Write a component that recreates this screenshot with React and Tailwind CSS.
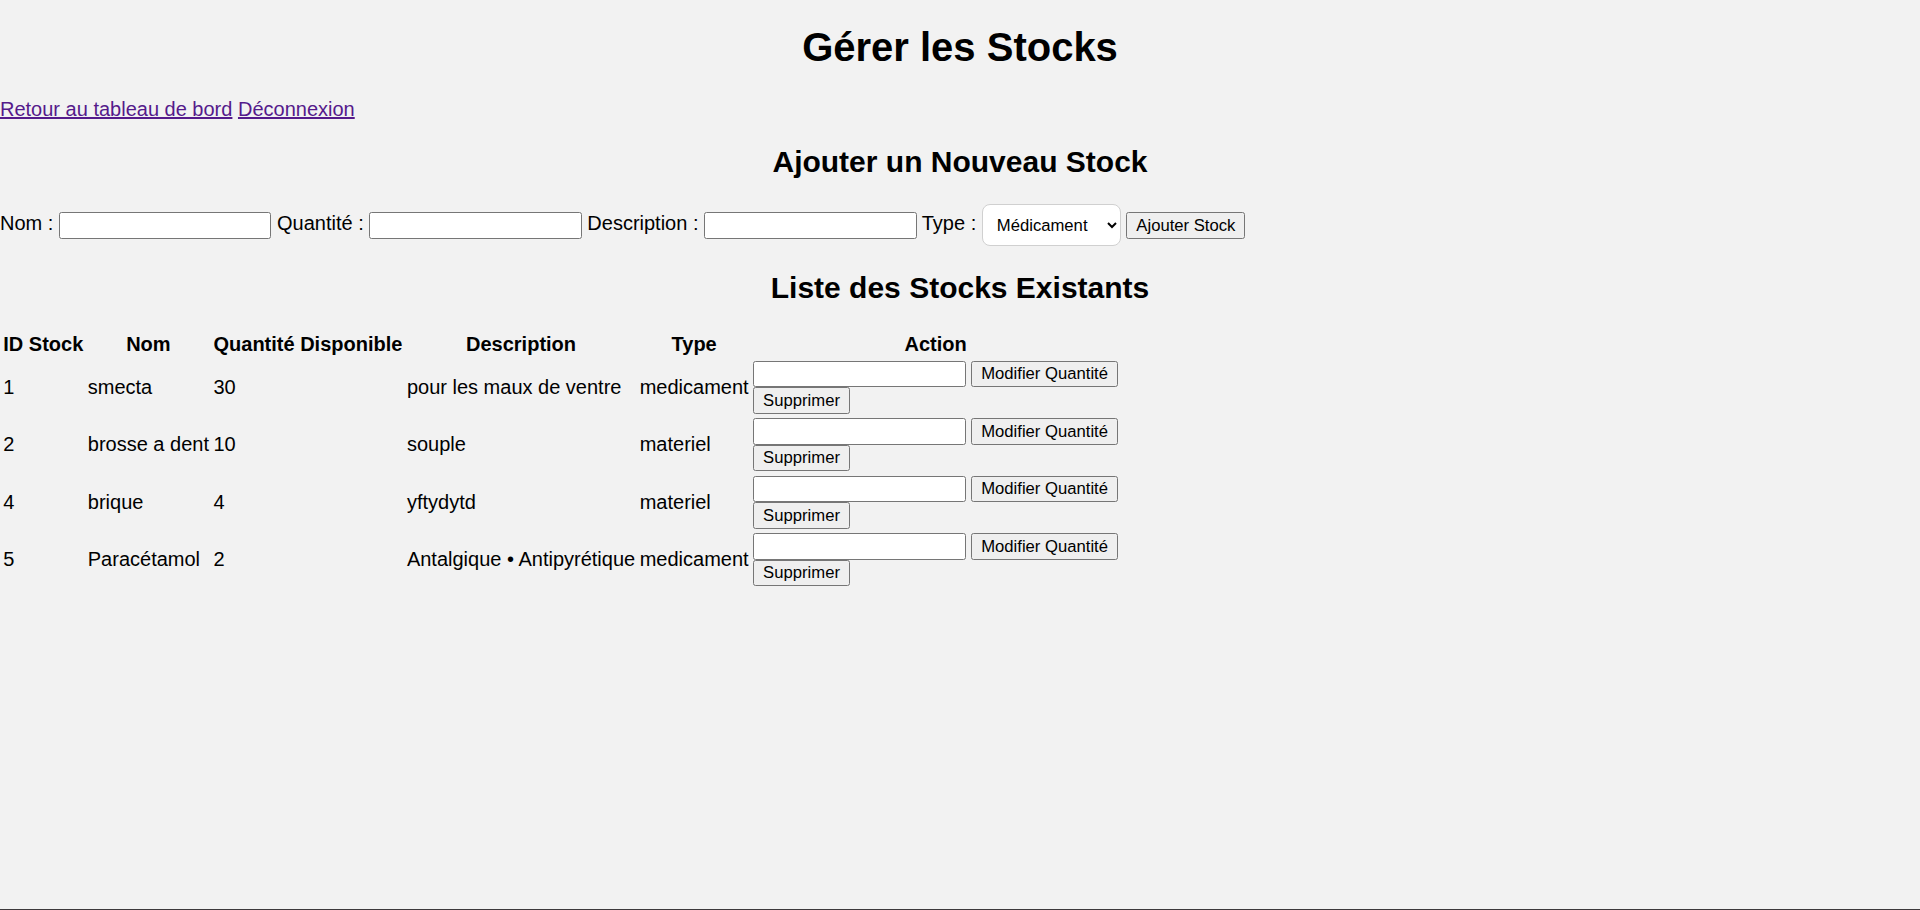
import { useState } from 'react';

const initialStocks = [
  { id: 1, nom: 'smecta', quantite: 30, description: 'pour les maux de ventre', type: 'medicament' },
  { id: 2, nom: 'brosse a dent', quantite: 10, description: 'souple', type: 'materiel' },
  { id: 4, nom: 'brique', quantite: 4, description: 'yftydytd', type: 'materiel' },
  { id: 5, nom: 'Paracétamol', quantite: 2, description: 'Antalgique • Antipyrétique', type: 'medicament' }
];

const inputClass =
  'w-[212.5px] h-[26.5px] border border-[#767676] rounded-[2.5px] bg-white px-[2.5px] text-[16.67px] leading-[normal] align-baseline';
const buttonClass =
  'h-[26.5px] border border-[#767676] rounded-[2.5px] bg-[#efefef] px-[9px] text-[16.67px] leading-[normal] text-black align-baseline';

function App() {
  const [stocks] = useState(initialStocks);

  return (
    <div className="min-h-[910px] bg-[#f2f2f2] text-black text-[20px] leading-[normal] font-['Liberation_Sans',Arial,sans-serif] border-b border-[#3d393b] overflow-hidden">
      <h1 className="text-center text-[40px] font-bold leading-[normal] mt-[24.5px] mb-[28px]">
        Gérer les Stocks
      </h1>

      {/* Navigation */}
      <div>
        <a href="#" className="text-[#551a8b] underline">Retour au tableau de bord</a>{' '}
        <a href="#" className="text-[#551a8b] underline">Déconnexion</a>
      </div>

      {/* Ajout */}
      <h2 className="text-center text-[30px] font-bold leading-[normal] my-[24.9px]">
        Ajouter un Nouveau Stock
      </h2>
      <form onSubmit={(e) => e.preventDefault()}>
        <label>Nom :</label>{' '}
        <input type="text" className={inputClass} />{' '}
        <label>Quantité :</label>{' '}
        <input type="text" className={inputClass} />{' '}
        <label>Description :</label>{' '}
        <input type="text" className={inputClass} />{' '}
        <label>Type :</label>{' '}
        <select className="w-[139px] h-[42px] border border-[#d0d0d0] rounded-[8px] bg-white pl-[10px] pr-[8px] text-[16.67px] leading-[normal] text-black align-middle">
          <option>Médicament</option>
          <option>Matériel</option>
        </select>{' '}
        <button type="submit" className={buttonClass}>Ajouter Stock</button>
      </form>

      {/* Liste */}
      <h2 className="text-center text-[30px] font-bold leading-[normal] my-[24.9px]">
        Liste des Stocks Existants
      </h2>
      <table className="border-separate border-spacing-[2.5px]">
        <thead>
          <tr>
            <th className="p-[1.25px] font-bold text-center">ID Stock</th>
            <th className="p-[1.25px] font-bold text-center">Nom</th>
            <th className="p-[1.25px] font-bold text-center">Quantité Disponible</th>
            <th className="p-[1.25px] font-bold text-center">Description</th>
            <th className="p-[1.25px] font-bold text-center">Type</th>
            <th className="p-[1.25px] font-bold text-center">Action</th>
          </tr>
        </thead>
        <tbody>
          {stocks.map((stock) => (
            <tr key={stock.id}>
              <td className="p-[1.25px] align-middle">{stock.id}</td>
              <td className="p-[1.25px] align-middle">{stock.nom}</td>
              <td className="p-[1.25px] align-middle">{stock.quantite}</td>
              <td className="p-[1.25px] align-middle">{stock.description}</td>
              <td className="p-[1.25px] align-middle">{stock.type}</td>
              <td className="p-[1.25px] align-middle">
                <form onSubmit={(e) => e.preventDefault()}>
                  <input type="text" className={inputClass} />{' '}
                  <button type="submit" className={buttonClass}>Modifier Quantité</button>
                </form>
                <form onSubmit={(e) => e.preventDefault()}>
                  <button type="submit" className={buttonClass}>Supprimer</button>
                </form>
              </td>
            </tr>
          ))}
        </tbody>
      </table>
    </div>
  );
}

export default App;
